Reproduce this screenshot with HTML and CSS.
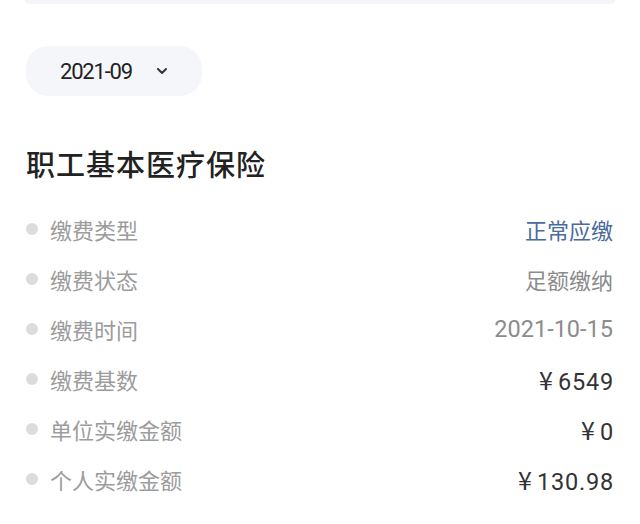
FILE: index.html
```html
<!DOCTYPE html>
<html lang="zh-CN">
<head>
<meta charset="utf-8">
<link rel="stylesheet" href="styles.css">
</head>
<body>
<div class="page">
  <div class="top-card"></div>
  <div class="content">
    <div class="month-pill">
      <span class="month-text">2021-09</span>
      <svg class="chevron" width="12" height="8" viewBox="0 0 12 8"><path d="M2 2 L6 6 L10 2" fill="none" stroke="#333" stroke-width="2" stroke-linecap="round" stroke-linejoin="round"/></svg>
    </div>
    <h1 class="title">职工基本医疗保险</h1>
    <ul class="rows">
      <li class="row"><span class="dot"></span><span class="label">缴费类型</span><span class="value blue">正常应缴</span></li>
      <li class="row"><span class="dot"></span><span class="label">缴费状态</span><span class="value grey">足额缴纳</span></li>
      <li class="row"><span class="dot"></span><span class="label">缴费时间</span><span class="value grey num">2021-10-15</span></li>
      <li class="row"><span class="dot"></span><span class="label">缴费基数</span><span class="value dark num amount"><span class="yen">¥</span>6549</span></li>
      <li class="row"><span class="dot"></span><span class="label">单位实缴金额</span><span class="value dark num amount"><span class="yen">¥</span>0</span></li>
      <li class="row"><span class="dot"></span><span class="label">个人实缴金额</span><span class="value dark num amount"><span class="yen">¥</span>130.98</span></li>
    </ul>
  </div>
</div>
</body>
</html>
```
FILE: styles.css
```css
* { box-sizing: border-box; }
html, body { margin: 0; padding: 0; background: #fff; }
body { font-family: "Noto Sans CJK SC", "Noto Sans", sans-serif; color: #333; }
.page { width: 640px; height: 524px; overflow: hidden; }
.top-card { height: 4px; margin: 0 25px; background: #f4f4f9; border-radius: 0 0 10px 10px; }
.content { padding: 0 27px 0 26px; }
.month-pill {
  margin-top: 42px;
  width: 176px; height: 50px;
  background: #f5f6fa;
  border-radius: 22px;
  display: flex; align-items: center;
  padding-left: 34px;
}
.month-text { font-family: Roboto, "Noto Sans", sans-serif; font-size: 22px; letter-spacing: -1.2px; color: #222; }
.chevron { margin-left: 24px; }
.title { margin: 47px 0 0; font-size: 29px; line-height: 40px; font-weight: 500; color: #222; letter-spacing: 1px; }
.rows { list-style: none; margin: 21px 0 0; padding: 0; }
.row { display: flex; align-items: center; height: 50px; font-size: 22px; }
.dot { width: 12px; height: 12px; border-radius: 50%; background: #dcdcdc; margin-right: 12px; flex: none; }
.label { color: #9c9c9c; flex: 1; }
.value { text-align: right; }
.blue { color: #4a6b9c; }
.grey { color: #8c8c8c; }
.dark { color: #333; }
.num { font-family: Roboto, "Noto Sans", sans-serif; font-size: 23.5px; }
.amount { letter-spacing: 0.8px; margin-right: -1px; }
.yen { font-family: "Noto Sans CJK SC", sans-serif; font-size: 25px; margin-right: 5px; letter-spacing: 0; }
```
